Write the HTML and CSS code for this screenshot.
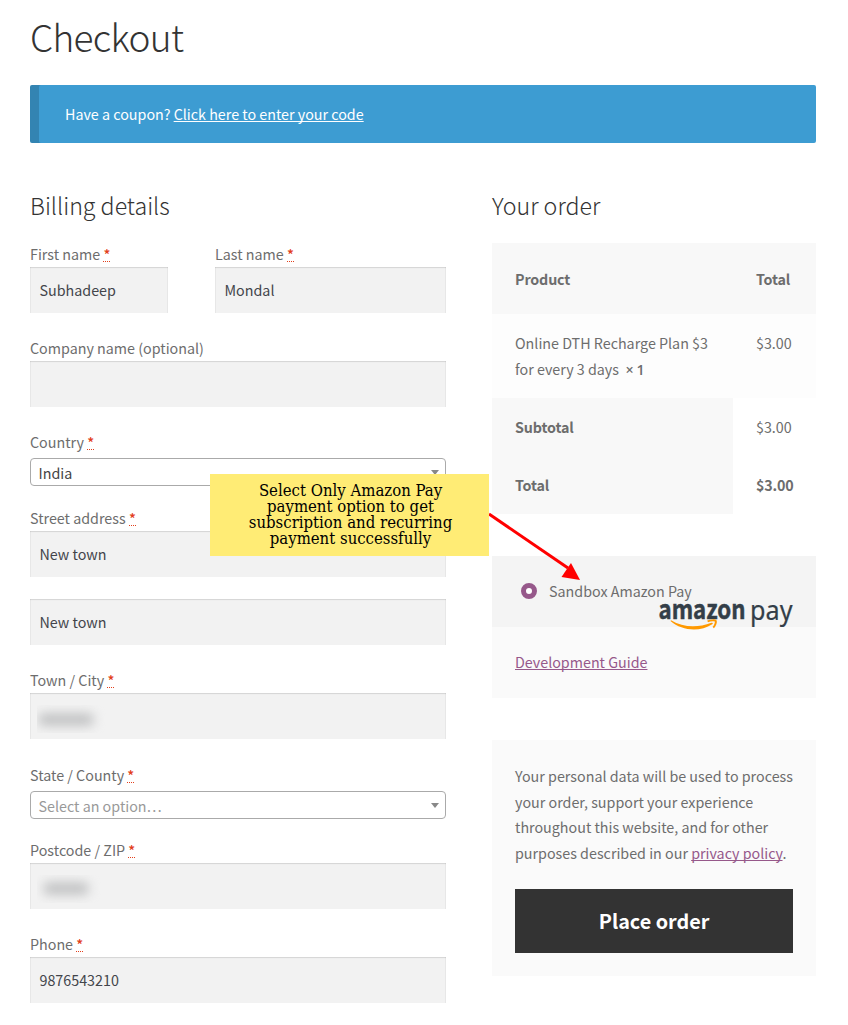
FILE: index.html
```html
<!DOCTYPE html>
<html lang="en">
<head>
<meta charset="utf-8">
<title>Checkout</title>
<link rel="stylesheet" href="styles.css">
</head>
<body>
<main class="page">
  <h1 class="title">Checkout</h1>
  <div class="notice">Have a coupon? <a href="#">Click here to enter your code</a></div>
  <div class="columns">
    <section class="billing">
      <h3 class="heading">Billing details</h3>
      <div class="row">
        <div class="field first"><label>First name <abbr title="required">*</abbr></label><div class="input">Subhadeep</div></div>
        <div class="field last"><label>Last name <abbr title="required">*</abbr></label><div class="input">Mondal</div></div>
      </div>
      <div class="field"><label>Company name (optional)</label><div class="input"></div></div>
      <div class="field country"><label>Country <abbr title="required">*</abbr></label><div class="select">India<i class="caret"></i></div></div>
      <div class="field"><label>Street address <abbr title="required">*</abbr></label><div class="input">New town</div></div>
      <div class="field"><div class="input">New town</div></div>
      <div class="field town"><label>Town / City <abbr title="required">*</abbr></label><div class="input"><span class="blurred"><span class="smudge city"></span></span></div></div>
      <div class="field state"><label>State / County <abbr title="required">*</abbr></label><div class="select placeholder">Select an option…<i class="caret"></i></div></div>
      <div class="field"><label>Postcode / ZIP <abbr title="required">*</abbr></label><div class="input"><span class="blurred"><span class="smudge zip"></span></span></div></div>
      <div class="field"><label>Phone <abbr title="required">*</abbr></label><div class="input">9876543210</div></div>
    </section>
    <section class="order">
      <h3 class="heading">Your order</h3>
      <div class="table">
        <div class="tr head"><div class="name">Product</div><div class="amount">Total</div></div>
        <div class="tr item"><div class="name">Online DTH Recharge Plan $3 for every 3 days&nbsp; <b class="qty">× 1</b></div><div class="amount">$3.00</div></div>
        <div class="tr sum"><div class="name">Subtotal</div><div class="amount">$3.00</div></div>
        <div class="tr sum"><div class="name">Total</div><div class="amount"><b>$3.00</b></div></div>
      </div>
      <div class="payment">
        <div class="method">
          <span class="radio"></span><span>Sandbox Amazon Pay</span>
          <svg class="logo" width="136" height="34" viewBox="0 0 136 34">
            <text class="logo-amazon" x="0.500" y="23" textLength="87" lengthAdjust="spacingAndGlyphs">amazon</text>
            <text class="logo-pay" x="92" y="23.500" textLength="42.500" lengthAdjust="spacingAndGlyphs">pay</text>
            <path d="M13 24.200C25 31.500 39 32.200 53.500 26.800C54.800 26.300 55.300 27.400 54.200 28.200C42 36.300 24 35 12.500 25Z" fill="#ff9900"/>
            <path d="M49.600 25.400C53 24 57.300 24.200 57.800 25C58.200 26.500 57 30 55.200 31.500" fill="none" stroke="#ff9900" stroke-width="2"/>
          </svg>
        </div>
        <div class="method-box"><a href="#">Development Guide</a></div>
      </div>
      <div class="place">
        <p>Your personal data will be used to process your order, support your experience throughout this website, and for other purposes described in our <a href="#">privacy policy</a>.</p>
        <button class="button">Place order</button>
      </div>
    </section>
  </div>
  <svg class="arrow" width="96" height="72" viewBox="0 0 96 72">
    <path d="M1 4L80 58" stroke="#f00" stroke-width="3"/>
    <path d="M92 70L73.500 67L83 53Z" fill="#f00"/>
  </svg>
  <div class="callout"><span>Select Only Amazon Pay</span><span>payment option to get</span><span>subscription and recurring</span><span>payment successfully</span></div>
</main>
</body>
</html>
```
FILE: styles.css
```css
* { box-sizing: border-box; }
body { margin: 0; background: #fff; color: #6d6d6d; font-family: "Source Sans Pro", "Noto Sans CJK SC", sans-serif; font-size: 14.3px; line-height: 26px; }
.page { position: relative; width: 848px; height: 1025px; padding: 11px 32px 0 30px; overflow: hidden; }
.title { margin: 0 0 23px; font-size: 37px; font-weight: 200; line-height: 51px; color: #333; letter-spacing: -.7px; }
.notice { height: 58px; padding: 16px 35px; background: #3d9cd2; box-shadow: inset 9px 0 0 rgba(0,0,0,.15); border-radius: 2px; color: #fff; }
.notice a { color: #fff; }
a { color: #96588a; text-decoration: underline; text-decoration-thickness: 1px; text-underline-offset: 1px; text-decoration-skip-ink: none; }
.columns { display: flex; gap: 46px; padding-top: 48px; }
.billing { width: 416px; }
.order { width: 324px; }
.heading { margin: 0; height: 50px; font-size: 23.2px; font-weight: 300; line-height: 29px; color: #333; }
.order .heading { height: 52px; }
.row { display: flex; gap: 47px; }
.first { width: 138px; }
.last { width: 231px; }
.field { margin-bottom: 22px; }
.field.country { margin-bottom: 19px; }
.field.town { margin-bottom: 23px; }
.field.state { margin-bottom: 18px; }
label { display: block; height: 26px; }
abbr { color: #e2401c; text-decoration: none; border-bottom: 1px dotted #e2401c; display: inline-block; line-height: 16px; height: 16px; font-weight: 500; }
.input { height: 46px; padding: 10px 9.5px; background: #f2f2f2; color: #43454b; box-shadow: inset 0 1px 1px rgba(0,0,0,.125), inset 1px 0 rgba(0,0,0,.03), inset -1px 0 rgba(0,0,0,.03); }
.select { display: flex; justify-content: space-between; align-items: center; height: 28px; margin-top: 3px; padding: 2px 6px 0 7.5px; border: 1px solid #aaa; border-radius: 4px; color: #444; }
.placeholder { color: #999; }
.caret { border: 4px solid transparent; border-top: 5px solid #888; border-bottom: 0; margin-bottom: 2px; }
.blurred { display: block; width: 80px; height: 28px; margin: 2px 0 0 -3px; overflow: hidden; }
.smudge { display: block; background: #c2c3c4; filter: blur(5.5px); border-radius: 6px; }
.city { width: 56px; height: 13px; margin: 8px 0 0 1px; }
.zip { width: 46px; height: 13px; margin: 7px 0 0 6px; }
.tr { display: flex; }
.name { width: 241px; padding: 0 23px; }
.amount { padding-left: 23px; }
.head { height: 71px; padding-top: 23px; background: #f8f8f8; font-weight: 600; }
.item { height: 84px; padding-top: 16px; background: #fdfdfd; }
b { font-weight: 600; }
.qty { font-family: "Open Sans", sans-serif; font-size: 14.3px; line-height: 20px; word-spacing: -.8px; }
.sum { height: 58px; }
.sum .name { background: #f8f8f8; font-weight: 600; padding-top: 16px; }
.sum .amount { padding-top: 16px; }
.head, .sum .name, .sum b { letter-spacing: -.15px; }
.payment { margin-top: 42px; background: #fafafa; }
.method { position: relative; display: flex; height: 71px; padding: 22px 0 0 29px; gap: 12px; background: #f4f4f4; }
.radio { width: 16px; height: 16px; margin-top: 5px; border: 5px solid #96588a; border-radius: 50%; background: #fff; }
.logo { position: absolute; left: 166px; top: 40px; overflow: visible; }
.logo-amazon { font: bold 26.8px "Noto Sans CJK SC", sans-serif; fill: #333e48; stroke: #333e48; stroke-width: .5px; }
.logo-pay { font: 27.5px "Noto Sans", sans-serif; fill: #333e48; stroke: #333e48; stroke-width: .2px; }
.method-box { height: 71px; padding: 22px 23px; }
.place { height: 236px; margin-top: 42px; padding: 23px 23px 0; background: #fafafa; }
.place p { margin: 0 0 23.6px; width: 282px; line-height: 25.6px; }
.button { display: block; width: 278px; height: 64px; border: 0; padding: 0; background: #333; color: #fff; font: 600 19.8px "Source Sans Pro", "Noto Sans CJK SC", sans-serif; }
.callout { position: absolute; left: 210px; top: 474px; width: 279px; height: 82px; padding: 9px 0 0 2px; background: #ffec75; color: #000; display: flex; flex-direction: column; align-items: center; font: 16.6px/16px "Roboto Slab", "DejaVu Serif Condensed", "DejaVu Serif", serif; font-stretch: condensed; white-space: nowrap; }
.arrow { position: absolute; left: 488px; top: 510px; }
```
